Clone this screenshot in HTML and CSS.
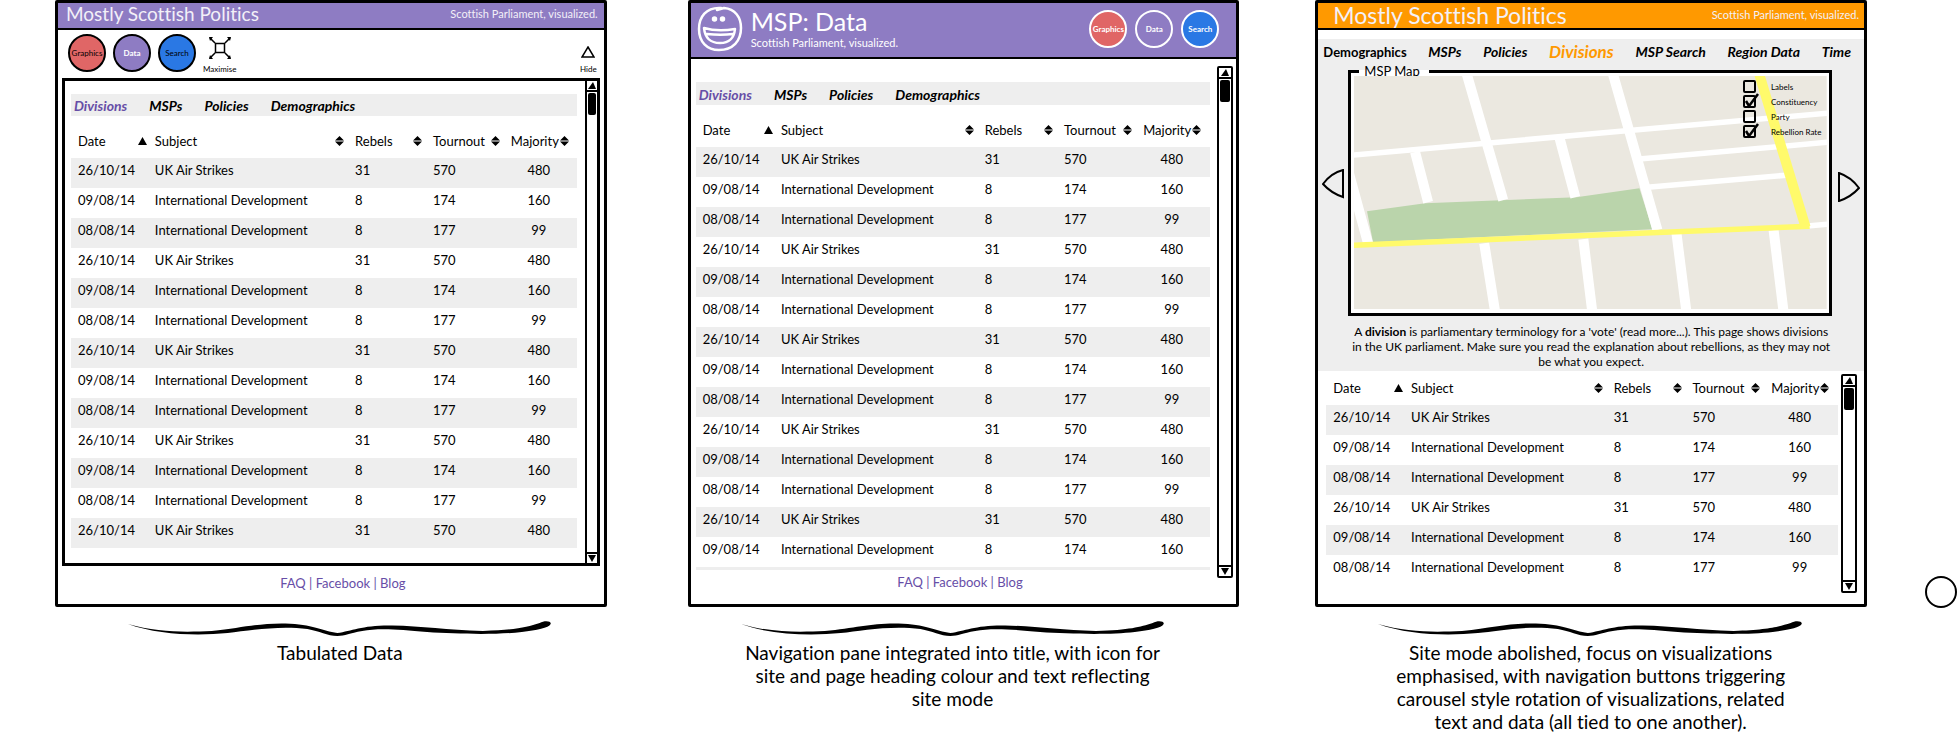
FILE: index.html
```html
<!DOCTYPE html>
<html lang="en">
<head>
<meta charset="utf-8">
<title>Mostly Scottish Politics</title>
<link rel="stylesheet" href="styles.css">
</head>
<body>
<svg class="defs" aria-hidden="true">
  <symbol id="brace" viewBox="0 0 425 16" preserveAspectRatio="none"><path d="M0 3C30 12 60 11 84 10C115 7 130 2 158 2.500C185 3 195 10 210 12C225 10 235 4 265 4.500C295 5 320 9 356 10C390 9 400 6 413 2C418-1 425 0 424 3C422 7 410 9 395 11C370 14 330 13 300 11C270 8 250 7 235 10C222 12 218 15 210 15C200 15 192 10 180 8C150 4 120 10 100 12C70 15 30 14 0 3Z"/></symbol>
  <symbol id="asc" viewBox="0 0 9 8"><path d="M4.500 0L9 8H0Z"/></symbol>
  <symbol id="both" viewBox="0 0 9 10"><path d="M4.500 0L9 4.500H0ZM0 5.500H9L4.500 10Z"/></symbol>
  <symbol id="up" viewBox="0 0 8 7"><path d="M5 0L8 7H0Z"/></symbol>
  <symbol id="down" viewBox="0 0 8 7"><path d="M0 0H8L4 7Z"/></symbol>
  <symbol id="tick" viewBox="0 0 17 17"><path d="M3 8L6 13L15 1" fill="none" stroke="#000" stroke-width="2.500"/></symbol>
</svg>
<main class="board">
  <figure class="mock mock-a">
    <section class="panel">
      <header class="bar">
        <h1 class="title">Mostly Scottish Politics</h1>
        <p class="tagline">Scottish Parliament, visualized.</p>
      </header>
      <div class="toolbar">
        <button class="disc red">Graphics</button>
        <button class="disc purple">Data</button>
        <button class="disc blue">Search</button>
        <button class="tool">
          <svg width="22" height="22" viewBox="0 0 22 22"><path d="M6.500 6.500H15.500V15.500H6.500ZM6 6L1 1M16 6L21 1M6 16L1 21M16 16L21 21" fill="none" stroke="#000" stroke-width="1.500"/><path d="M0 0H4L1 4ZM22 0H18L21 4ZM0 22H4L1 18ZM22 22H18L21 18Z"/></svg>
          <span>Maximise</span>
        </button>
        <button class="tool hide">
          <svg width="14" height="12" viewBox="0 0 14 12"><path d="M7 1L13 11H1Z" fill="none" stroke="#000" stroke-width="1.500"/></svg>
          <span>Hide</span>
        </button>
      </div>
      <div class="box">
        <div class="content">
          <nav class="tabs"><a class="on" href="#">Divisions</a><a href="#">MSPs</a><a href="#">Policies</a><a href="#">Demographics</a></nav>
          <table class="data">
            <colgroup><col class="c-date"><col class="c-subject"><col class="c-num"><col class="c-num"><col class="c-last"></colgroup>
            <thead><tr>
              <th><button>Date<svg width="9" height="8"><use href="#asc"/></svg></button></th>
              <th><button>Subject<svg width="9" height="10"><use href="#both"/></svg></button></th>
              <th><button>Rebels<svg width="9" height="10"><use href="#both"/></svg></button></th>
              <th><button>Tournout<svg width="9" height="10"><use href="#both"/></svg></button></th>
              <th><button>Majority<svg width="9" height="10"><use href="#both"/></svg></button></th>
            </tr></thead>
            <tbody>
              <tr><td>26/10/14</td><td>UK Air Strikes</td><td>31</td><td>570</td><td>480</td></tr>
              <tr><td>09/08/14</td><td>International Development</td><td>8</td><td>174</td><td>160</td></tr>
              <tr><td>08/08/14</td><td>International Development</td><td>8</td><td>177</td><td>99</td></tr>
              <tr><td>26/10/14</td><td>UK Air Strikes</td><td>31</td><td>570</td><td>480</td></tr>
              <tr><td>09/08/14</td><td>International Development</td><td>8</td><td>174</td><td>160</td></tr>
              <tr><td>08/08/14</td><td>International Development</td><td>8</td><td>177</td><td>99</td></tr>
              <tr><td>26/10/14</td><td>UK Air Strikes</td><td>31</td><td>570</td><td>480</td></tr>
              <tr><td>09/08/14</td><td>International Development</td><td>8</td><td>174</td><td>160</td></tr>
              <tr><td>08/08/14</td><td>International Development</td><td>8</td><td>177</td><td>99</td></tr>
              <tr><td>26/10/14</td><td>UK Air Strikes</td><td>31</td><td>570</td><td>480</td></tr>
              <tr><td>09/08/14</td><td>International Development</td><td>8</td><td>174</td><td>160</td></tr>
              <tr><td>08/08/14</td><td>International Development</td><td>8</td><td>177</td><td>99</td></tr>
              <tr><td>26/10/14</td><td>UK Air Strikes</td><td>31</td><td>570</td><td>480</td></tr>
            </tbody>
          </table>
        </div>
        <div class="scroll">
          <button aria-label="Scroll up"><svg width="8" height="7"><use href="#up"/></svg></button>
          <span class="thumb"></span>
          <button aria-label="Scroll down"><svg width="8" height="7"><use href="#down"/></svg></button>
        </div>
      </div>
      <footer class="links"><a href="#">FAQ</a> | <a href="#">Facebook</a> | <a href="#">Blog</a></footer>
    </section>
    <figcaption class="caption">
      <svg class="brace"><use href="#brace"/></svg>
      Tabulated Data
    </figcaption>
  </figure>

  <figure class="mock mock-b">
    <section class="panel">
      <header class="bar tall">
        <svg class="smiley" width="46" height="46" viewBox="0 0 46 46" fill="none" stroke="#fff" stroke-width="2.500" stroke-linecap="round" stroke-linejoin="round"><path d="M24 2C9 1 2 11 2 23C2 36 10 44 22 44C36 44 44 35 44 22C44 11 38 3 27 2L20 4"/><path d="M7 22C17 25 27 25 38 23C37 33 31 37 23 37C13 37 8 32 7 22ZM10 28C19 29 28 29 36 28"/><circle cx="17.500" cy="13" r="1.500" fill="#fff"/><circle cx="25.500" cy="13" r="1.500" fill="#fff"/></svg>
        <div class="heading">
          <h1 class="title">MSP: Data</h1>
          <p class="tagline">Scottish Parliament, visualized.</p>
        </div>
        <button class="disc red">Graphics</button>
        <button class="disc purple">Data</button>
        <button class="disc blue">Search</button>
      </header>
      <div class="sheet">
        <div class="content">
          <nav class="tabs"><a class="on" href="#">Divisions</a><a href="#">MSPs</a><a href="#">Policies</a><a href="#">Demographics</a></nav>
          <table class="data">
            <colgroup><col class="c-date"><col class="c-subject"><col class="c-num"><col class="c-num"><col class="c-last"></colgroup>
            <thead><tr>
              <th><button>Date<svg width="9" height="8"><use href="#asc"/></svg></button></th>
              <th><button>Subject<svg width="9" height="10"><use href="#both"/></svg></button></th>
              <th><button>Rebels<svg width="9" height="10"><use href="#both"/></svg></button></th>
              <th><button>Tournout<svg width="9" height="10"><use href="#both"/></svg></button></th>
              <th><button>Majority<svg width="9" height="10"><use href="#both"/></svg></button></th>
            </tr></thead>
            <tbody>
              <tr><td>26/10/14</td><td>UK Air Strikes</td><td>31</td><td>570</td><td>480</td></tr>
              <tr><td>09/08/14</td><td>International Development</td><td>8</td><td>174</td><td>160</td></tr>
              <tr><td>08/08/14</td><td>International Development</td><td>8</td><td>177</td><td>99</td></tr>
              <tr><td>26/10/14</td><td>UK Air Strikes</td><td>31</td><td>570</td><td>480</td></tr>
              <tr><td>09/08/14</td><td>International Development</td><td>8</td><td>174</td><td>160</td></tr>
              <tr><td>08/08/14</td><td>International Development</td><td>8</td><td>177</td><td>99</td></tr>
              <tr><td>26/10/14</td><td>UK Air Strikes</td><td>31</td><td>570</td><td>480</td></tr>
              <tr><td>09/08/14</td><td>International Development</td><td>8</td><td>174</td><td>160</td></tr>
              <tr><td>08/08/14</td><td>International Development</td><td>8</td><td>177</td><td>99</td></tr>
              <tr><td>26/10/14</td><td>UK Air Strikes</td><td>31</td><td>570</td><td>480</td></tr>
              <tr><td>09/08/14</td><td>International Development</td><td>8</td><td>174</td><td>160</td></tr>
              <tr><td>08/08/14</td><td>International Development</td><td>8</td><td>177</td><td>99</td></tr>
              <tr><td>26/10/14</td><td>UK Air Strikes</td><td>31</td><td>570</td><td>480</td></tr>
              <tr><td>09/08/14</td><td>International Development</td><td>8</td><td>174</td><td>160</td></tr>
            </tbody>
          </table>
          <div class="cutoff"></div>
          <footer class="links"><a href="#">FAQ</a> | <a href="#">Facebook</a> | <a href="#">Blog</a></footer>
        </div>
        <div class="scroll framed">
          <button aria-label="Scroll up"><svg width="8" height="7"><use href="#up"/></svg></button>
          <span class="thumb"></span>
          <button aria-label="Scroll down"><svg width="8" height="7"><use href="#down"/></svg></button>
        </div>
      </div>
    </section>
    <figcaption class="caption">
      <svg class="brace"><use href="#brace"/></svg>
      Navigation pane integrated into title, with icon for<br>site and page heading colour and text reflecting<br>site mode
    </figcaption>
  </figure>

  <figure class="mock mock-c">
    <section class="panel">
      <header class="bar orange">
        <h1 class="title">Mostly Scottish Politics</h1>
        <p class="tagline">Scottish Parliament, visualized.</p>
      </header>
      <div class="viz">
        <nav class="sections"><a class="plain" href="#">Demographics</a><a href="#">MSPs</a><a href="#">Policies</a><a class="current" href="#">Divisions</a><a href="#">MSP Search</a><a href="#">Region Data</a><a href="#">Time</a></nav>
        <div class="carousel">
          <button class="turn" aria-label="Previous"><svg width="22" height="30" viewBox="0 0 22 30"><path d="M21 1V28Q9 24 1 15Q9 4 21 1Z" fill="none" stroke="#000" stroke-width="2"/></svg></button>
          <fieldset class="map">
            <legend>MSP Map</legend>
            <svg class="streets" viewBox="0 0 472 233" preserveAspectRatio="none">
              <rect width="472" height="233" fill="#ebe8e0"/>
              <path d="M13 135L71 127L222 121L285 112L298 153L19 166Z" fill="#bad4ab"/>
              <g fill="none" stroke="#fff" stroke-width="10"><path d="M112-4L149 124M258-4L303 154M61 76L74 126M205 61L221 121M-7 90L14 167M130 167L141 236M229 163L238 236M322 157L332 236M419 154L429 236"/><path d="M-2 79L269 55L474 37M285 83L474 66M293 111L432 99M450 150L474 148" stroke-width="5.500"/></g>
              <path d="M404-4L451 151" fill="none" stroke="#fffa6b" stroke-width="10"/>
              <path d="M-2 169L455 150" fill="none" stroke="#fffa6b" stroke-width="5.500"/>
            </svg>
            <div class="layers">
              <label><span class="check"><input type="checkbox"><svg width="17" height="17"><use href="#tick"/></svg></span>Labels</label>
              <label><span class="check"><input type="checkbox" checked><svg width="17" height="17"><use href="#tick"/></svg></span>Constituency</label>
              <label><span class="check"><input type="checkbox"><svg width="17" height="17"><use href="#tick"/></svg></span>Party</label>
              <label><span class="check"><input type="checkbox" checked><svg width="17" height="17"><use href="#tick"/></svg></span>Rebellion Rate</label>
            </div>
          </fieldset>
          <button class="turn next" aria-label="Next"><svg width="22" height="30" viewBox="0 0 22 30"><path d="M1 1V29Q13 25 21 16Q13 5 1 1Z" fill="none" stroke="#000" stroke-width="2"/></svg></button>
        </div>
        <p class="about">A <b>division</b> is parliamentary terminology for a 'vote' (read more...). This page shows divisions<br>in the UK parliament. Make sure you read the explanation about rebellions, as they may not<br>be what you expect.</p>
      </div>
      <div class="sheet">
        <div class="content">
          <table class="data">
            <colgroup><col class="c-date"><col class="c-subject"><col class="c-num"><col class="c-num"><col class="c-last"></colgroup>
            <thead><tr>
              <th><button>Date<svg width="9" height="8"><use href="#asc"/></svg></button></th>
              <th><button>Subject<svg width="9" height="10"><use href="#both"/></svg></button></th>
              <th><button>Rebels<svg width="9" height="10"><use href="#both"/></svg></button></th>
              <th><button>Tournout<svg width="9" height="10"><use href="#both"/></svg></button></th>
              <th><button>Majority<svg width="9" height="10"><use href="#both"/></svg></button></th>
            </tr></thead>
            <tbody>
              <tr><td>26/10/14</td><td>UK Air Strikes</td><td>31</td><td>570</td><td>480</td></tr>
              <tr><td>09/08/14</td><td>International Development</td><td>8</td><td>174</td><td>160</td></tr>
              <tr><td>08/08/14</td><td>International Development</td><td>8</td><td>177</td><td>99</td></tr>
              <tr><td>26/10/14</td><td>UK Air Strikes</td><td>31</td><td>570</td><td>480</td></tr>
              <tr><td>09/08/14</td><td>International Development</td><td>8</td><td>174</td><td>160</td></tr>
              <tr><td>08/08/14</td><td>International Development</td><td>8</td><td>177</td><td>99</td></tr>
            </tbody>
          </table>
        </div>
        <div class="scroll framed">
          <button aria-label="Scroll up"><svg width="8" height="7"><use href="#up"/></svg></button>
          <span class="thumb"></span>
          <button aria-label="Scroll down"><svg width="8" height="7"><use href="#down"/></svg></button>
        </div>
      </div>
    </section>
    <figcaption class="caption">
      <svg class="brace"><use href="#brace"/></svg>
      Site mode abolished, focus on visualizations<br>emphasised, with navigation buttons triggering<br>carousel style rotation of visualizations, related<br>text and data (all tied to one another).
    </figcaption>
  </figure>

  <div class="marker"></div>
</main>
</body>
</html>
```
FILE: styles.css
```css
* {
  box-sizing: border-box;
}

body {
  margin: 0;
  background: #fff;
  color: #000;
  font: 13px/16px Lato, "Open Sans", sans-serif;
  font-variant-ligatures: none;
  overflow: hidden;
}

button {
  margin: 0;
  padding: 0;
  border: 0;
  background: none;
  color: inherit;
  font: inherit;
}

a {
  color: inherit;
  text-decoration: none;
}

svg {
  display: block;
  flex: none;
}

.defs {
  display: none;
}

.board {
  display: grid;
  grid-template-columns: minmax(0, 1fr) 81px minmax(0, 1fr) 76px minmax(0, 1fr) 58px 32px;
  padding-left: 55px;
  align-items: start;
}

.mock {
  margin: 0;
}

.mock-a { grid-column: 1; }
.mock-b { grid-column: 3; }
.mock-c { grid-column: 5; }

.panel {
  display: flex;
  flex-direction: column;
  border: 3px solid #000;
  border-radius: 2px;
}

/* Title bars */

.bar {
  display: flex;
  align-items: center;
  justify-content: space-between;
  height: 27px;
  padding: 0 6px 4px 8px;
  border-bottom: 2px solid #000;
  background: #8e7cc3;
  color: #f3f0f8;
}

.title {
  margin: 0;
  font-size: 19px;
  font-weight: 400;
  line-height: 24px;
}

.tagline {
  margin: 0;
  font-size: 11px;
  line-height: 16px;
}

.bar.orange {
  padding: 0 5px 2px 15px;
  background: #f90;
}

.orange .title {
  font-size: 23px;
}

.bar.tall {
  gap: 8px;
  height: 56px;
  padding: 0 17px 2px 6px;
  color: #fff;
}

.heading {
  flex: 1;
}

.tall .title {
  font-size: 25px;
  line-height: 28px;
}

/* Round mode buttons */

.disc {
  flex: none;
  width: 38px;
  height: 38px;
  border: 2px solid #000;
  border-radius: 50%;
  font-size: 8px;
  line-height: 12px;
  text-align: center;
  white-space: nowrap;
}

.red { background: #e06666; }
.purple { background: #8e7cc3; }
.blue { background: #2a78e4; }

.toolbar .purple {
  color: #fff;
  font-weight: 700;
}

.tall .disc {
  border-color: #fff;
  font-weight: 700;
}

.toolbar {
  display: flex;
  align-items: flex-start;
  gap: 7px;
  height: 48px;
  padding: 4px 7px 0 10px;
}

.tool {
  display: flex;
  flex-direction: column;
  align-items: center;
  justify-content: space-between;
  height: 41px;
  padding-top: 3px;
  font-size: 8px;
  line-height: 12px;
}

.hide {
  margin-left: auto;
  padding-top: 12px;
}

/* Scrolling table areas */

.box {
  display: flex;
  margin: 0 4px;
  border: 3px solid #000;
}

.box .content {
  flex: 1;
  padding: 13px 8px 15px 6px;
}

.sheet {
  display: flex;
}

.sheet .content {
  flex: 1;
  padding: 0 7px 0 5px;
}

.tabs {
  display: flex;
  align-items: center;
  gap: 22px;
  height: 22px;
  margin-bottom: 8px;
  padding: 2px 3px 0;
  background: #eee;
  font-size: 14px;
  font-weight: 700;
  font-style: italic;
}

.on {
  color: #674ea7;
}

.mock-b .content {
  padding-top: 23px;
}

.mock-b .tabs {
  height: 23px;
}

.data {
  width: 100%;
  border-collapse: collapse;
  table-layout: fixed;
}

.c-date { width: 15.200%; }
.c-subject { width: 39.600%; }
.c-num { width: 15.400%; }
.c-last { width: 14.400%; }

th,
td {
  height: 30px;
  padding: 0 0 6px 7px;
  text-align: left;
  font-weight: 400;
  white-space: nowrap;
}

th {
  height: 34px;
  padding: 0 4px 0 7px;
}

th:first-child {
  padding-right: 1px;
}

th button {
  display: flex;
  align-items: center;
  justify-content: space-between;
  width: 100%;
}

th:last-child button {
  justify-content: flex-start;
  gap: 1px;
}

td:last-child {
  padding: 0 3px 6px 0;
  text-align: center;
}

tbody tr:nth-child(odd) {
  background: #eee;
}

.cutoff {
  height: 3px;
  background: #eee;
}

.links {
  padding: 9px 0 13px 24px;
  color: #674ea7;
  text-align: center;
}

.mock-b .links {
  padding: 4px 0 14px 14px;
}

.scroll {
  display: flex;
  flex: none;
  flex-direction: column;
  width: 12px;
  border-left: 2px solid #000;
}

.scroll button {
  display: grid;
  flex: none;
  place-items: center;
  height: 11px;
}

.scroll button:first-child {
  border-bottom: 2px solid #000;
}

.scroll button:last-child {
  margin-top: auto;
  border-top: 2px solid #000;
}

.thumb {
  height: 22px;
  margin: 1px;
  border-radius: 2px;
  background: #000;
}

.framed {
  width: 16px;
  margin: 7px 3px 26px 0;
  border: 2px solid #000;
  border-radius: 2px;
}

/* Visualization area */

.viz {
  margin-top: 9px;
  background: #eee;
}

.sections {
  display: flex;
  align-items: center;
  justify-content: space-between;
  height: 27px;
  padding: 0 13px 2px 5px;
  font-size: 14px;
  font-weight: 700;
  font-style: italic;
}

.plain {
  font-size: 13px;
  font-style: normal;
}

.current {
  color: #f90;
  font-size: 17px;
}

.carousel {
  display: flex;
  align-items: center;
  padding: 0 4px;
}

.turn {
  margin-bottom: 14px;
}

.turn.next {
  margin-bottom: 8px;
}

.map {
  position: relative;
  flex: 1;
  min-width: 0;
  margin: 0 6px 0 4px;
  padding: 0 2px 4px 3px;
  border: 3px solid #000;
  background: #fff;
}

.map legend {
  margin-left: 5px;
  padding: 0 9px 0 5px;
  line-height: 10px;
}

.streets {
  width: 100%;
  height: auto;
}

.layers {
  position: absolute;
  top: 3px;
  right: 6px;
  display: flex;
  flex-direction: column;
  width: 80px;
  font-size: 8px;
}

.layers label {
  display: flex;
  align-items: center;
  height: 15px;
  white-space: nowrap;
}

.check {
  display: grid;
  flex: none;
  align-items: center;
  width: 28px;
}

.check input,
.check svg {
  grid-area: 1 / 1;
}

.check input {
  width: 13px;
  height: 13px;
  margin: 0;
  border: 2px solid #000;
  border-radius: 2px;
  appearance: none;
}

.check svg {
  display: none;
}

.check input:checked + svg {
  display: block;
}

.about {
  margin: 0;
  padding: 8px 0 2px;
  font-size: 12px;
  line-height: 15px;
  text-align: center;
  white-space: nowrap;
}

.mock-c .sheet .content {
  padding: 0 3px 19px 8px;
}

.mock-c .framed {
  margin: 3px 7px 11px 0;
}

/* Captions */

.caption {
  padding: 14px 55px 0 73px;
  font-size: 19px;
  line-height: 23px;
  text-align: center;
  white-space: nowrap;
}

.mock-b .caption {
  padding: 14px 75px 0 53px;
}

.mock-c .caption {
  padding: 14px 64px 0 63px;
}

.brace {
  width: 100%;
  height: 16px;
  margin-bottom: 4px;
}

.marker {
  grid-column: 7;
  width: 32px;
  height: 32px;
  margin-top: 576px;
  border: 2px solid #000;
  border-radius: 50%;
}
```
